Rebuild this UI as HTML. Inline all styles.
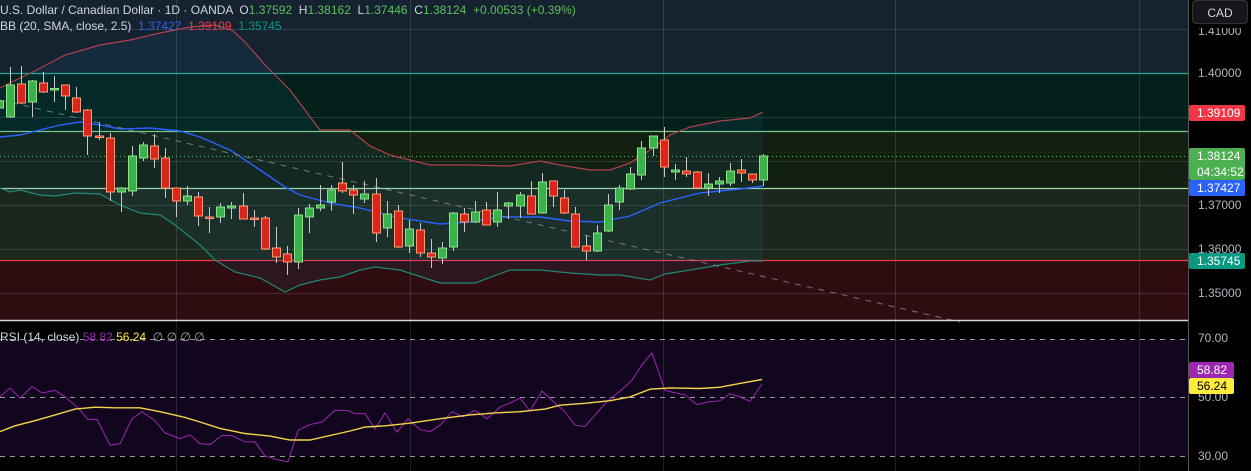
<!DOCTYPE html>
<html><head><meta charset="utf-8"><style>
html,body{margin:0;padding:0;background:#000;width:1251px;height:471px;overflow:hidden}
#w{position:relative;width:1251px;height:471px;font-family:"Liberation Sans",sans-serif}
.t{position:absolute;font-size:12px;color:#d1d4dc;white-space:nowrap}
.ax{position:absolute;left:1198px;font-size:12px;color:#b2b5be}
.tag{position:absolute;left:1189px;width:56px;font-size:12px;color:#fff;padding-left:8px;box-sizing:border-box;line-height:16px;border-radius:2px}
</style></head><body><div id="w">
<svg id="s" width="1251" height="471" style="position:absolute;left:0;top:0">
<rect x="0" y="0" width="1188" height="73" fill="#152230"/>
<rect x="0" y="73" width="1188" height="58" fill="#04201a"/>
<rect x="0" y="131" width="1188" height="57" fill="#122012"/>
<rect x="0" y="188" width="1188" height="72" fill="#1b271d"/>
<rect x="0" y="260" width="1188" height="60" fill="#2e0c10"/>
<rect x="0" y="321" width="1188" height="150" fill="#000"/>
<rect x="0" y="339" width="1188" height="117" fill="#12061f"/>
<g stroke="#ffffff" stroke-opacity="0.12" stroke-width="1">
<line x1="0" y1="29.5" x2="1188" y2="29.5"/><line x1="0" y1="117.5" x2="1188" y2="117.5"/>
<line x1="0" y1="161.5" x2="1188" y2="161.5"/><line x1="0" y1="205.5" x2="1188" y2="205.5"/>
<line x1="0" y1="249.5" x2="1188" y2="249.5"/><line x1="0" y1="293.5" x2="1188" y2="293.5"/>
<line x1="176.5" y1="0" x2="176.5" y2="471"/><line x1="410.5" y1="0" x2="410.5" y2="471"/>
<line x1="663.5" y1="0" x2="663.5" y2="471"/><line x1="895.5" y1="0" x2="895.5" y2="471"/>
<line x1="1139.5" y1="0" x2="1139.5" y2="471"/>
</g>
<line x1="0" y1="73.5" x2="1188" y2="73.5" stroke="#26a69a" stroke-width="1.2"/>
<line x1="0" y1="131.5" x2="1188" y2="131.5" stroke="#81c784" stroke-width="1.2"/>
<line x1="0" y1="188.5" x2="1188" y2="188.5" stroke="#a5d6a7" stroke-width="1.2"/>
<line x1="0" y1="260.5" x2="1188" y2="260.5" stroke="#e53945" stroke-width="1.2"/>
<line x1="0" y1="156.5" x2="1188" y2="156.5" stroke="#66bb6a" stroke-dasharray="1 3"/>
<g id="bb"></g>
<line x1="0" y1="100" x2="960" y2="322" stroke="#9598a1" stroke-opacity="0.7" stroke-dasharray="6 6"/>
<g id="cd"></g>
<line x1="0" y1="320.5" x2="1188" y2="320.5" stroke="#d8d8d8" stroke-width="1.5"/>
<g stroke="#9598a1" stroke-dasharray="5 5"><line x1="0" y1="339.5" x2="1188" y2="339.5"/><line x1="0" y1="397.5" x2="1188" y2="397.5"/><line x1="0" y1="456.5" x2="1188" y2="456.5"/></g>
<g id="rsi"></g>
<rect x="1189" y="0" width="62" height="471" fill="#000"/>
<line x1="1188.5" y1="0" x2="1188.5" y2="471" stroke="#555"/>
</svg>
<div class="t" style="left:0;top:3px">U.S. Dollar / Canadian Dollar · 1D · OANDA &nbsp;O<span style="color:#5cc05c">1.37592</span> &nbsp;H<span style="color:#5cc05c">1.38162</span> &nbsp;L<span style="color:#5cc05c">1.37446</span> &nbsp;C<span style="color:#5cc05c">1.38124</span> &nbsp;<span style="color:#5cc05c">+0.00533 (+0.39%)</span></div>
<div class="t" style="left:0;top:19px">BB (20, SMA, close, 2.5) &nbsp;<span style="color:#2962ff">1.37427</span> &nbsp;<span style="color:#f23645">1.39109</span> &nbsp;<span style="color:#089981">1.35745</span></div>
<div class="t" style="left:0;top:330px">RSI (14, close) <span style="color:#9c27b0">58.82</span> <span style="color:#ffeb3b">56.24</span> &nbsp;<span style="color:#aaa">∅ ∅ ∅ ∅</span></div>
<div style="position:absolute;left:1192px;top:0;width:56px;height:24px;background:#15171c;border:1px solid #333;border-radius:4px;color:#d1d4dc;font-size:12px;line-height:24px;text-align:center;box-sizing:border-box">CAD</div>
<div class="ax" style="top:24px;clip-path:inset(4px 0 0 0)">1.41000</div>
<div class="ax" style="top:66px">1.40000</div>
<div class="ax" style="top:198px">1.37000</div>
<div class="ax" style="top:242px">1.36000</div>
<div class="ax" style="top:286px">1.35000</div>
<div class="ax" style="top:331px">70.00</div>
<div class="ax" style="top:390px">50.00</div>
<div class="ax" style="top:449px">30.00</div>
<div class="tag" style="top:105px;background:#f23645">1.39109</div>
<div class="tag" style="top:148px;background:#4caf50;height:32px">1.38124<br>04:34:52</div>
<div class="tag" style="top:180px;background:#2962ff">1.37427</div>
<div class="tag" style="top:253px;background:#089981">1.35745</div>
<div class="tag" style="top:362px;left:1189px;width:45px;background:#9c27b0">58.82</div>
<div class="tag" style="top:378px;left:1189px;width:45px;background:#ffeb3b;color:#000">56.24</div>
</div>
<script>
var NS="http://www.w3.org/2000/svg";
function el(p,t,a){var e=document.createElementNS(NS,t);for(var k in a)e.setAttribute(k,a[k]);p.appendChild(e);return e;}
function pts(a){return a.map(function(p){return p[0]+","+p[1]}).join(" ");}
var up=[[0,88],[20,78],[33,72],[65,55],[100,45],[130,40],[160,33],[190,27],[215,25],[232,30],[245,42],[265,65],[290,90],[305,110],[320,130],[350,130],[370,146],[390,155],[430,165],[470,165],[510,166],[540,161],[560,165],[590,170],[610,170],[630,163],[650,150],[670,135],[690,127],[720,121],[750,118],[763,112]];
var mid=[[0,137],[20,135],[40,130],[60,125],[80,122],[100,125],[120,129],[150,128],[180,131],[200,137],[230,150],[260,170],[285,187],[300,195],[330,203],[360,208],[400,218],[440,224],[470,222],[500,217],[540,217],[570,221],[600,222],[630,216],[660,203],[700,193],[740,189],[763,186]];
var lo=[[0,188],[10,192],[20,190],[40,195],[55,196],[75,193],[100,194],[120,205],[140,213],[160,215],[175,225],[200,245],[215,260],[235,272],[260,278],[285,292],[300,285],[320,280],[340,277],[360,270],[375,267],[400,270],[440,283],[475,283],[510,270],[540,270],[570,273],[600,275],[620,275],[650,280],[665,274],[690,270],[720,265],[750,261],[763,261]];
var bb=document.getElementById("bb");
el(bb,"polygon",{points:pts(up)+" "+pts(lo.slice().reverse()),fill:"#2196f3","fill-opacity":"0.07"});
el(bb,"polyline",{points:pts(up),fill:"none",stroke:"#b2404c","stroke-width":1.2});
el(bb,"polyline",{points:pts(mid),fill:"none",stroke:"#2962ff","stroke-width":1.4});
el(bb,"polyline",{points:pts(lo),fill:"none",stroke:"#1e8a74","stroke-width":1.2});
var C=[[108,101,95,110],[117,85,67,118],[84,103,66,104],[102,81,80,117],[83,92,72,93],[89.5,88.5,76,102],[85,96,85,110],[98,112,87,113],[110,136,109,155],[136,137,122,140],[138,192,133,201],[192,188,187,212],[191,156,146,196],[158,145,142,161],[146,159,134,168],[158,188,148,198],[188,201,188,217],[201,196,186,205],[197,216,192,226],[217,218,207,233],[217,207,203,223],[208,206,202,219],[206,219,193,219],[218,219,210,227],[218,249,216,250],[248,257,227,263],[254,262,246,275],[262,215,208,269],[217,208,204,233],[208,205,185,211],[202,190,185,211],[183,191,162,193],[190,195,185,214],[199,194,181,203],[194,233,178,242],[228,214,201,237],[211,247,205,248],[246,229,220,253],[230,253,223,257],[253,257,239,268],[258,248,242,264],[247,213,212,251],[214,222,208,232],[222,212,201,223],[210,225,202,225],[222,210,192,227],[206,203,202,219],[206,195,192,218],[196,214,181,214],[213,182,173,213],[181,196,181,207],[198,213,190,214],[214,247,207,247],[246,251,235,260],[251,233,225,252],[231,205,194,232],[202,188,185,210],[189,174,167,190],[175,148,141,180],[148,136,136,156],[140,167,127,177],[172,170,164,180],[171,174,157,177],[172,188,171,189],[188,184,173,196],[184,181,177,193],[183,171,163,186],[170,173,159,182],[174,180,174,183],[180,156,154,186]];
var cd=document.getElementById("cd");
C.forEach(function(d,k){var x=Math.round(-1.2+11.08*k)+0.5;var g=d[1]<d[0];
el(cd,"line",{x1:x,x2:x,y1:d[2],y2:d[3],stroke:"#c8c8c8","stroke-width":1});
var t=Math.min(d[0],d[1]),b=Math.max(d[0],d[1]);if(b-t<1.5)b=t+1.5;
el(cd,"rect",{x:x-4,y:t,width:8,height:b-t,fill:g?"#3cb04a":"#d8261c",stroke:g?"#8ee08a":"#ff9a70","stroke-width":1});});
var P=[[0,378],[10,364],[20,380],[32,362],[42,372],[55,368],[65,378],[78,395],[88,413],[97,413],[110,453],[120,451],[132,412],[142,401],[155,415],[165,434],[180,443],[190,437],[200,451],[210,452],[222,438],[232,438],[245,448],[255,448],[265,470],[278,476],[288,479],[298,430],[310,421],[322,417],[335,399],[347,399],[355,404],[365,404],[375,428],[385,403],[397,433],[408,412],[420,429],[430,432],[440,422],[452,401],[463,409],[475,399],[487,412],[500,394],[512,386],[520,380],[530,400],[542,369],[555,388],[565,401],[575,422],[585,424],[595,406],[607,385],[620,369],[632,352],[642,328],[652,310],[665,368],[685,375],[697,390],[708,386],[720,384],[730,373],[740,378],[750,385],[762,358]];
var Y=[[0,432],[15,423],[35,415],[55,406],[75,397],[95,394],[115,395],[140,395],[160,401],[185,410],[200,417],[220,427],[245,435],[270,439],[290,445],[310,445],[330,438],[350,431],[365,425],[385,423],[410,419],[440,412],[470,406],[495,403],[520,401],[545,397],[560,391],[585,388],[610,384],[630,378],[650,366],[670,364],[700,365],[720,363],[740,357],[762,351]];
function sc(a){return a.map(function(p){return [p[0],(321+(p[1]-260)*0.643).toFixed(1)]});}
var r=document.getElementById("rsi");
el(r,"polyline",{points:pts(sc(P)),fill:"none",stroke:"#9c27b0","stroke-width":1});
el(r,"polyline",{points:pts(sc(Y)),fill:"none",stroke:"#f5d54a","stroke-width":1.4});
</script>
</body></html>
